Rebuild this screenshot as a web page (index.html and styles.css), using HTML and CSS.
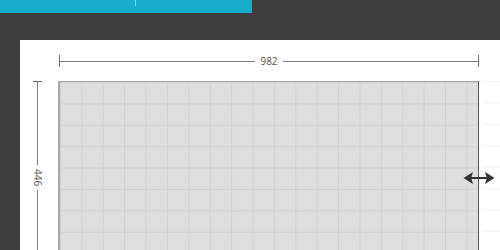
FILE: index.html
```html
<!DOCTYPE html>
<html>
<head>
<meta charset="utf-8">
<link rel="stylesheet" href="styles.css">
</head>
<body>
<div class="topbar">
  <div class="seg seg-a"></div>
  <div class="divider"></div>
  <div class="seg seg-b"></div>
</div>
<div class="panel">
  <div class="corner"></div>
  <div class="hdim">
    <span class="htick"></span>
    <span class="hline"></span>
    <span class="hlabel">982</span>
    <span class="hline"></span>
    <span class="htick"></span>
  </div>
  <div class="top-rest"></div>
  <div class="vdim">
    <span class="vtick"></span>
    <span class="vline vline-top"></span>
    <span class="vlabel">446</span>
    <span class="vline vline-bottom"></span>
  </div>
  <div class="canvas">
    <div class="handle">
      <svg width="32" height="14" viewBox="0 0 32 14">
        <path d="M0.5 7 L10 1 L8.5 6 L23.5 6 L22 1 L31.5 7 L22 13 L23.5 8 L8.5 8 L10 13 Z" fill="#333"/>
      </svg>
    </div>
  </div>
  <div class="outside"></div>
</div>
</body>
</html>
```
FILE: styles.css
```css
html, body {
  margin: 0;
  padding: 0;
}
body {
  background: #3e3e3e;
  width: 500px;
  height: 250px;
  overflow: hidden;
  font-family: "Open Sans", "DejaVu Sans", sans-serif;
}
.topbar {
  display: flex;
  width: 252px;
  height: 13px;
  background: #17aecc;
}
.seg-a {
  flex: 0 0 135px;
}
.divider {
  flex: 0 0 1px;
  height: 6px;
  background: #86d6e6;
}
.seg-b {
  flex: 1;
}
.panel {
  margin: 27px 0 0 20px;
  height: 210px;
  background: #fff;
  display: grid;
  grid-template-columns: 38px 421px 1fr;
  grid-template-rows: 41px 1fr;
  overflow: hidden;
}
.hdim {
  display: flex;
  align-items: center;
  height: 12px;
  margin-top: 15px;
  padding-left: 1px;
}
.htick {
  width: 1px;
  height: 12px;
  background: #6e6e6e;
}
.hline {
  flex: 1;
  height: 1px;
  background: #7c7c7c;
}
.hlabel {
  font-size: 10px;
  color: #555;
  padding: 0 5px;
  line-height: 12px;
}
.vdim {
  display: flex;
  flex-direction: column;
  align-items: center;
  width: 9px;
  margin-left: 13px;
}
.vtick {
  width: 9px;
  height: 1px;
  background: #6e6e6e;
}
.vline {
  width: 1px;
  background: #7c7c7c;
}
.vline-top {
  height: 83px;
}
.vline-bottom {
  flex: 1;
}
.vlabel {
  writing-mode: vertical-rl;
  font-size: 10px;
  color: #555;
  padding: 4px 0;
  line-height: 12px;
}
.canvas {
  position: relative;
  background-color: #dedede;
  background-image:
    linear-gradient(to right, #d1d1d1 1px, transparent 1px),
    linear-gradient(to bottom, #d1d1d1 1px, transparent 1px);
  background-size: 21.4px 21.4px;
  background-position: 0 0;
  border-left: 2px solid #a8a8a8;
  border-top: 1px solid #a8a8a8;
  border-right: 1px solid #555;
}
.outside {
  background-color: #fff;
  background-image:
    linear-gradient(to bottom, #f1f1f1 1px, transparent 1px);
  background-size: 21.4px 21.4px;
  background-position: 0 0;
  margin-left: 4px;
}
.handle {
  position: absolute;
  right: -17px;
  top: 89px;
  width: 32px;
  height: 14px;
}
.handle svg {
  display: block;
}
```
